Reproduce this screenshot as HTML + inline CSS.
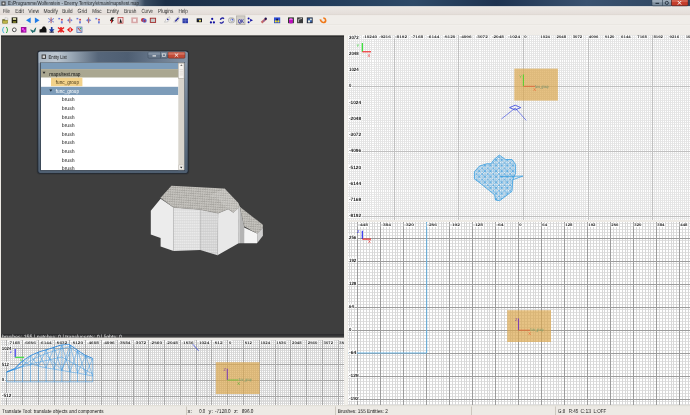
<!DOCTYPE html>
<html><head><meta charset="utf-8"><style>
html,body{margin:0;padding:0;width:690px;height:415px;overflow:hidden;background:#edeae5;font-family:"Liberation Sans",sans-serif;}
</style></head><body>
<svg width="690" height="415" viewBox="0 0 690 415" style="position:absolute;left:0;top:0;will-change:transform;text-rendering:geometricPrecision">
<defs>
<linearGradient id="tbar" x1="0" y1="0" x2="1" y2="0">
 <stop offset="0" stop-color="#9eabb9"/><stop offset="0.05" stop-color="#b2bdc8"/><stop offset="0.19" stop-color="#aab6c2"/><stop offset="0.21" stop-color="#36495f"/><stop offset="0.24" stop-color="#1c2f47"/><stop offset="0.45" stop-color="#213a58"/><stop offset="0.6" stop-color="#2e4a68"/><stop offset="0.72" stop-color="#1e3350"/><stop offset="0.85" stop-color="#3a5270"/><stop offset="1" stop-color="#2e4560"/>
</linearGradient>
<linearGradient id="elbar" x1="0" y1="0" x2="1" y2="0">
 <stop offset="0" stop-color="#aab6c2"/><stop offset="0.12" stop-color="#bcc6d0"/><stop offset="0.22" stop-color="#9aa8b6"/><stop offset="0.4" stop-color="#56667a"/><stop offset="0.6" stop-color="#4e5e72"/><stop offset="0.8" stop-color="#6a7a8e"/><stop offset="1" stop-color="#8494a6"/>
</linearGradient>
<linearGradient id="menug" x1="0" y1="0" x2="0" y2="1">
 <stop offset="0" stop-color="#ece8e4"/><stop offset="1" stop-color="#e3dcd8"/>
</linearGradient>
<linearGradient id="elframe" x1="0" y1="0" x2="0" y2="1">
 <stop offset="0" stop-color="#9eacba"/><stop offset="0.15" stop-color="#8494a6"/><stop offset="1" stop-color="#4e5e70"/>
</linearGradient>
<clipPath id="cEL"><rect x="41" y="62.8" width="137.3" height="107.3"/></clipPath>
<clipPath id="cXY"><rect x="348" y="35" width="342" height="185"/></clipPath>
<clipPath id="cYZ"><rect x="348" y="222" width="342" height="183"/></clipPath>
<clipPath id="cXZ"><rect x="1" y="340" width="343" height="65"/></clipPath>
<clipPath id="cCam"><rect x="1" y="35" width="343" height="302.6"/></clipPath>
<pattern id="roof" width="2.3" height="2.4" patternUnits="userSpaceOnUse" patternTransform="rotate(4)">
 <rect width="2.3" height="2.4" fill="#b8b6b1"/><circle cx="0.9" cy="0.8" r="0.7" fill="#d6d4ce"/><circle cx="1.5" cy="1.7" r="0.55" fill="#8e8c87"/>
</pattern>
<pattern id="brickA" width="2" height="1.6" patternUnits="userSpaceOnUse">
 <rect width="2" height="1.6" fill="#ececec"/><rect y="1.1" width="2" height="0.5" fill="#d2d2d2"/><rect x="1" width="0.4" height="1.1" fill="#dadada"/>
</pattern>
<pattern id="brickB" width="2" height="1.6" patternUnits="userSpaceOnUse">
 <rect width="2" height="1.6" fill="#e2e2e2"/><rect y="1.1" width="2" height="0.5" fill="#c4c4c4"/><rect x="1" width="0.4" height="1.1" fill="#cccccc"/>
</pattern>
<pattern id="hatch" width="5.6" height="5.6" patternUnits="userSpaceOnUse" x="0.5" y="0.3">
 <path d="M0 0L5.6 5.6M5.6 0L0 5.6M0 0H5.6M0 0V5.6M0 2.8H5.6M2.8 0V5.6" stroke="#3098e0" stroke-width="0.5"/>
</pattern>
</defs>
<rect width="690" height="415" fill="#edeae5"/>
<rect x="0" y="0" width="690" height="7" fill="url(#tbar)"/>
<rect x="0" y="6.5" width="690" height="8.5" fill="url(#menug)"/>
<rect x="0" y="6.3" width="690" height="0.7" fill="#f4f2ee"/>
<rect x="0" y="14.6" width="690" height="0.6" fill="#d9d5cd"/>
<rect x="0" y="15.2" width="690" height="19.5" fill="#f0ede9"/>
<rect x="0" y="24.3" width="690" height="0.5" fill="#dedad3"/>
<rect x="0" y="24.8" width="690" height="0.5" fill="#f8f6f2"/>
<rect x="1.5" y="1.5" width="4" height="4" fill="#3a3a3a"/><rect x="2.5" y="2.5" width="2" height="2" fill="#dddddd"/>
<text x="8" y="5" font-family="Liberation Sans" font-size="5.8" fill="#202428" font-weight="normal" text-anchor="start" textLength="131" lengthAdjust="spacingAndGlyphs">E:/Programme/Wolfenstein - Enemy Territory/etmain/maps/test.map</text>
<rect x="652" y="-1" width="19.5" height="6.8" rx="1" fill="#7e8e9e" stroke="#2a3a4a" stroke-width="0.5"/>
<rect x="652.3" y="-0.5" width="19" height="2.8" fill="#c0ccd8" fill-opacity="0.45"/>
<rect x="662" y="-1" width="0.6" height="6.8" fill="#2a3a4a"/>
<rect x="655.5" y="2.8" width="3.6" height="1.1" fill="#1e2a36"/>
<circle cx="666.8" cy="2.9" r="1.6" fill="none" stroke="#1e2a36" stroke-width="0.8"/>
<rect x="671.5" y="-1" width="16.5" height="6.8" rx="1" fill="#c43c2a" stroke="#4a1a14" stroke-width="0.5"/>
<rect x="671.8" y="-0.5" width="16" height="2.6" fill="#f0a090" fill-opacity="0.35"/>
<path d="M677.8 1L681.2 4.6M681.2 1L677.8 4.6" stroke="#f6f6f6" stroke-width="1"/>
<text x="2.9" y="13" font-family="Liberation Sans" font-size="6" fill="#2e2e2e" font-weight="normal" text-anchor="start" textLength="7" lengthAdjust="spacingAndGlyphs">File</text>
<text x="15.2" y="13" font-family="Liberation Sans" font-size="6" fill="#2e2e2e" font-weight="normal" text-anchor="start" textLength="8.7" lengthAdjust="spacingAndGlyphs">Edit</text>
<text x="28.3" y="13" font-family="Liberation Sans" font-size="6" fill="#2e2e2e" font-weight="normal" text-anchor="start" textLength="10.8" lengthAdjust="spacingAndGlyphs">View</text>
<text x="43.5" y="13" font-family="Liberation Sans" font-size="6" fill="#2e2e2e" font-weight="normal" text-anchor="start" textLength="14.5" lengthAdjust="spacingAndGlyphs">Modify</text>
<text x="62.3" y="13" font-family="Liberation Sans" font-size="6" fill="#2e2e2e" font-weight="normal" text-anchor="start" textLength="10.2" lengthAdjust="spacingAndGlyphs">Build</text>
<text x="77.5" y="13" font-family="Liberation Sans" font-size="6" fill="#2e2e2e" font-weight="normal" text-anchor="start" textLength="9.5" lengthAdjust="spacingAndGlyphs">Grid</text>
<text x="92.2" y="13" font-family="Liberation Sans" font-size="6" fill="#2e2e2e" font-weight="normal" text-anchor="start" textLength="9.4" lengthAdjust="spacingAndGlyphs">Misc</text>
<text x="106.7" y="13" font-family="Liberation Sans" font-size="6" fill="#2e2e2e" font-weight="normal" text-anchor="start" textLength="12.3" lengthAdjust="spacingAndGlyphs">Entity</text>
<text x="124" y="13" font-family="Liberation Sans" font-size="6" fill="#2e2e2e" font-weight="normal" text-anchor="start" textLength="12.4" lengthAdjust="spacingAndGlyphs">Brush</text>
<text x="141.4" y="13" font-family="Liberation Sans" font-size="6" fill="#2e2e2e" font-weight="normal" text-anchor="start" textLength="11.6" lengthAdjust="spacingAndGlyphs">Curve</text>
<text x="158" y="13" font-family="Liberation Sans" font-size="6" fill="#2e2e2e" font-weight="normal" text-anchor="start" textLength="15.3" lengthAdjust="spacingAndGlyphs">Plugins</text>
<text x="178.4" y="13" font-family="Liberation Sans" font-size="6" fill="#2e2e2e" font-weight="normal" text-anchor="start" textLength="9.4" lengthAdjust="spacingAndGlyphs">Help</text>
<path d="M2.3 19.2h2.2l0.6 0.6h2.6v3.6h-5.4z" fill="#5a5a22"/><path d="M5 17.6l2.8 0.5v1.8l-2.6 0.3z" fill="#f4f4f4" stroke="#8a8a8a" stroke-width="0.3"/><path d="M2.8 20.6h5.4l-1.1 2.8h-4.3z" fill="#bcb448"/>
<rect x="11.7" y="17.4" width="5.6" height="5.8" fill="#1e1e10"/><rect x="12.9" y="18" width="3.2" height="2" fill="#cfcfa0"/><rect x="12.9" y="21.2" width="3.2" height="1.6" fill="#8a8a30"/>
<path d="M26 20.3L30.7 17.4V23.2z" fill="#1f7be8"/>
<path d="M39.5 20.3L34.9 17.4V23.2z" fill="#1f7be8"/>
<path d="M48.2 18.4L54 22.2M54 18.4L48.2 22.2" stroke="#6a7ad8" stroke-width="0.9"/><rect x="50.6" y="17.4" width="1" height="5.8" fill="#b05a60"/>
<rect x="58.3" y="17.9" width="1.8" height="1.5" fill="#6a7ad8"/><rect x="61.1" y="18.9" width="1.6" height="1.6" fill="#c03040"/><rect x="60.9" y="21.2" width="1.8" height="2.2" fill="#6a7ad8"/>
<path d="M67 20.3L69 18.8V21.8zM72.6 20.3L70.6 18.8V21.8z" fill="#6a7ad8"/><rect x="69.3" y="17.4" width="1" height="5.8" fill="#b05a60"/>
<rect x="76.5" y="17.9" width="1.8" height="1.5" fill="#6a7ad8"/><rect x="79.3" y="18.9" width="1.6" height="1.6" fill="#c03040"/><rect x="79.1" y="21.2" width="1.8" height="2.2" fill="#6a7ad8"/>
<path d="M86 20.3L88 18.8V21.8zM91.2 20.3L89.2 18.8V21.8z" fill="#6a7ad8"/><rect x="88.1" y="17.4" width="1" height="5.8" fill="#b05a60"/>
<rect x="95.4" y="17.9" width="1.8" height="1.5" fill="#6a7ad8"/><rect x="98.2" y="18.9" width="1.6" height="1.6" fill="#c03040"/><rect x="98" y="21.2" width="1.8" height="2.2" fill="#6a7ad8"/>
<path d="M111.4 17.4h3l-2 2.5h1.5l-3 3.8l0.5-2.8h-1.5z" fill="#1a1a1a"/><rect x="110.9" y="19.9" width="1.3" height="2.5" fill="#d02020"/>
<rect x="118" y="17.4" width="5" height="5.8" fill="#f0e0e0" stroke="#c04040" stroke-width="0.7"/><path d="M119.5 22.7L120.5 18.4L122 22.7" fill="#1a1a1a"/>
<rect x="131.3" y="17.4" width="6.5" height="5.8" fill="#d8a8a8"/><rect x="133.1" y="18.9" width="2.9" height="2.8" fill="#f6eeee"/>
<circle cx="143" cy="19.9" r="2" fill="#c03040"/><circle cx="144.6" cy="20.7" r="2.1" fill="#5a6ad0"/><circle cx="144.6" cy="20.9" r="1" fill="#b03040"/>
<rect x="150.3" y="18.2" width="5.3" height="4.2" fill="#c8cccc" stroke="#a02828" stroke-width="0.9"/>
<path d="M164.5 22.2l2-3.5l3-2l0.5 1.5l-2 3.5z" fill="#f8f8f8" stroke="#909090" stroke-width="0.4"/><circle cx="167.8" cy="19.4" r="0.8" fill="#101090"/>
<path d="M173.8 22.2l2-3.5l3-2l0.5 1.5l-2 3.5z" fill="#f8f8f8" stroke="#909090" stroke-width="0.4"/><path d="M175.3 21.4L178.5 17.9" stroke="#101090" stroke-width="1.2"/>
<rect x="182.5" y="18.4" width="5.5" height="4.8" fill="#2a3aa8"/><path d="M185.25 18.4V23.2M182.5 20.8H188" stroke="#9aa0d8" stroke-width="0.4"/>
<rect x="196.7" y="18.4" width="5.3" height="3.8" fill="#1a1a1a"/><path d="M197.7 19.6H201" stroke="#2040a0" stroke-width="1"/><circle cx="200" cy="20.7" r="1.1" fill="#e8e070"/>
<circle cx="212.2" cy="18.9" r="1.1" fill="#1010a0"/><circle cx="210.9" cy="22.4" r="1.1" fill="#1010a0"/><circle cx="213.9" cy="22.4" r="1.1" fill="#1010a0"/>
<path d="M220.5 19.9a2 2 0 0 1 3.5-1.2" stroke="#2020a0" stroke-width="1.3" fill="none"/><path d="M223.4 21.2a2 2 0 0 1 -3.5 1.2" stroke="#2020a0" stroke-width="1.3" fill="none"/>
<rect x="228.7" y="17.9" width="5.5" height="4.8" rx="1.5" fill="#e8e8e8" stroke="#8a8a8a" stroke-width="0.6"/><circle cx="231.95" cy="20" r="1.6" fill="#f8f8ff" stroke="#707070" stroke-width="0.4"/><circle cx="232.25" cy="19.7" r="0.7" fill="#1030e0"/>
<rect x="236.5" y="15.9" width="8.5" height="8.8" fill="#d2cfc8" stroke="#a9a59c" stroke-width="0.6"/><text x="238" y="22.7" font-family="Liberation Sans" font-size="5.5" fill="#2828a0" font-weight="bold" text-anchor="start" textLength="6" lengthAdjust="spacingAndGlyphs">QK</text>
<circle cx="248.6" cy="18.4" r="1" fill="#1010a0"/><circle cx="248.6" cy="22.2" r="1" fill="#1010a0"/><path d="M250.1 18.8L253 20.3L250.1 21.8z" fill="#1010a0"/>
<path d="M261.5 22.7L266 18.9" stroke="#c86868" stroke-width="2.2"/><path d="M263 21.2L265 20.4" stroke="#7060b0" stroke-width="0.9"/><circle cx="265.7" cy="18.7" r="1.2" fill="#201050"/>
<rect x="274" y="17.4" width="6.2" height="5.8" fill="#3050d8"/><circle cx="275.8" cy="21.4" r="1.1" fill="#f0e020"/><circle cx="278.4" cy="21.4" r="1.1" fill="#f0e020"/><circle cx="277.1" cy="19.4" r="0.9" fill="#101040"/>
<rect x="288" y="17.4" width="5.9" height="5.8" fill="#2a3a2a"/><path d="M289 19.2h3.9v3.2a1.95 1 0 0 1 -3.9 0z" fill="#c010c0"/><ellipse cx="290.95" cy="19.2" rx="1.95" ry="0.9" fill="#f060f0"/>
<rect x="297.1" y="17.4" width="5.9" height="5.8" fill="#3a3a3a"/><path d="M298.6 22.2V19.4L302 18.4" stroke="#d0d0d0" stroke-width="0.8" fill="none"/>
<rect x="306.8" y="17.4" width="5.9" height="5.8" fill="#2a3040"/><rect x="307.8" y="18.4" width="3.9" height="3.8" fill="#3a68b0"/><rect x="308" y="20.4" width="2" height="2" fill="#f0f0e0"/><rect x="310.1" y="18.6" width="1.6" height="1.6" fill="#f0f0e0"/>
<path d="M321.35 20.9A2.2 2.2 0 1 0 323.35 18.1" stroke="#f07818" stroke-width="1.6" fill="none"/><path d="M319.6 19.1l2.6 0.9l-2 1.8z" fill="#f07818"/>
<path d="M4.2 27.3q-1.2 0 -1.2 1.2v0.9l-0.8 0.6l0.8 0.6v0.9q0 1.2 1.2 1.2" stroke="#38b0e0" stroke-width="1" fill="none"/><path d="M6 27.3q1.2 0 1.2 1.2v0.9l0.8 0.6l-0.8 0.6v0.9q0 1.2 -1.2 1.2" stroke="#28a838" stroke-width="1" fill="none"/>
<circle cx="14.3" cy="29.8" r="1.9" fill="#f8f8f8" stroke="#505050" stroke-width="1"/>
<rect x="20.9" y="27" width="5.5" height="5.6" fill="#9a109a"/><rect x="21.9" y="28" width="2" height="2" fill="#f040f0"/><rect x="23.4" y="29.6" width="2" height="2" fill="#f040f0"/>
<path d="M30.7 29.8l2 3l3-5l-1 4z" fill="#1a6a6a" stroke="#1a6a6a" stroke-width="0.8"/>
<path d="M39.5 32.6v-3l2 -0.5l1.5-2.5h2l1.5 2.5v3.5z" fill="#101010"/>
<path d="M50.9 27h1.6v2.2h2l-2.8 3.3l-2.8-3.3h2z" fill="#1a3aa0"/><rect x="49.5" y="31.6" width="4.4" height="1" fill="#101030"/>
<path d="M58 27.5L64 32.1M64 27.5L58 32.1M61 27V32.6" stroke="#e82020" stroke-width="1.5"/>
<path d="M70.15 27L73.3 29.8L70.15 32.6L67 29.8z" fill="#e81818"/><rect x="69.65" y="28.3" width="1" height="3" fill="#ffffff"/>
<rect x="76.9" y="27" width="5.1" height="5.6" fill="#c8d8f0" stroke="#4a6ab0" stroke-width="0.7"/><path d="M77.9 28L81 31.6" stroke="#c03030" stroke-width="1"/><rect x="79.8" y="27.8" width="1.4" height="1.4" fill="#30a050"/>
<rect x="1" y="35.6" width="343" height="302" fill="#3e3e3e"/>
<rect x="1" y="35.6" width="343" height="0.9" fill="#1c1c1c"/>
<rect x="1" y="334.2" width="343" height="1.3" fill="#2a2a2c"/>
<g clip-path="url(#cCam)">
<path d="M160.6 198.8L150.8 210.8V234.6L160.6 237.9V246.5L173.6 250.9V207.5Z" fill="#ececec"/>
<path d="M173.6 207.5L200.2 209.6V250L173.6 250.9Z" fill="url(#brickA)"/>
<path d="M200.2 209.6L218.1 213.2L217.5 255.2L200.2 250Z" fill="url(#brickB)"/>
<path d="M218.1 213.2L228.2 208.9L233.3 212.5L238.4 206L238.6 243.3L217.5 255.2Z" fill="#e8e8e8"/>
<path d="M238.4 205L239.8 206.7V243.3H238.6Z" fill="#f6f6f6"/>
<path d="M239.8 206.7L244.1 226.2V243.3H239.8Z" fill="#b4b4b4"/>
<path d="M244.1 227.5L257.1 233.5V243.3H244.1Z" fill="#f4f4f4"/>
<path d="M257.1 233.5L262.9 227.7V235.7L257.1 243.3Z" fill="#cfcfcf"/>
<path d="M171.4 185.8L224.6 188.5L238.4 203.1L239.8 206.7L233.3 212.5L228.2 208.9L218.1 213.2L200.2 209.6L173.6 207.5L160.6 197.8Z" fill="url(#roof)"/>
<path d="M209.5 195.9L218.1 198.8L222.5 203.8L228.2 208.9L233.3 212.5L239.8 206.7L238.4 203.1L224.6 188.5Z" fill="#ffffff" fill-opacity="0.12"/>
<path d="M239.8 206.7L262.9 224.8L262.9 227.7L257.1 233.5L244.1 226.2Z" fill="url(#roof)"/>
<path d="M160.6 197.8L173.6 207.5L200.2 209.6L218.1 213.2L228.2 208.9L233.3 212.5L239.8 206.7" fill="none" stroke="#a09e9a" stroke-width="0.5"/>
<path d="M173.6 207.5V250.9M200.2 209.6V250M218.1 213.2L217.5 255.2" stroke="#c8c8c8" stroke-width="0.4"/>
</g>
<g clip-path="url(#cCam)">
<text x="2" y="338.5" font-family="Liberation Sans" font-size="6.2" fill="#e8e8e8" font-weight="normal" text-anchor="start" textLength="120" lengthAdjust="spacingAndGlyphs">brushes: 155 | patches: 0 | translucents: 0 | lights: 0</text>
</g>
<rect x="36.8" y="50.2" width="152.4" height="124.4" rx="3" fill="#303234" fill-opacity="0.8"/>
<rect x="37.6" y="50.8" width="150.8" height="122.8" rx="2.4" fill="#1c2430"/>
<rect x="38.3" y="51.5" width="149.4" height="121.4" rx="2" fill="url(#elframe)"/>
<rect x="38.8" y="52" width="148.4" height="10.8" fill="url(#elbar)"/>
<rect x="40.3" y="62.3" width="144.6" height="108.6" fill="#34404e"/>
<rect x="41" y="62.8" width="143.2" height="107.3" fill="#ffffff"/>
<rect x="41.6" y="54.5" width="4.4" height="4.4" fill="#404040"/><rect x="42.6" y="55.5" width="2.4" height="2.4" fill="#d8d8d8"/>
<text x="48.5" y="58.9" font-family="Liberation Sans" font-size="5.5" fill="#1a1a1a" font-weight="normal" text-anchor="start" textLength="18.2" lengthAdjust="spacingAndGlyphs">Entity List</text>
<rect x="148" y="52" width="20" height="6.2" rx="1" fill="#66768a" stroke="#3a4858" stroke-width="0.5"/>
<rect x="148.3" y="52.2" width="19.4" height="2.6" fill="#9aa8b8" fill-opacity="0.5"/>
<rect x="160" y="52" width="0.5" height="6.2" fill="#3a4858"/>
<rect x="152.5" y="55.3" width="3.5" height="1.2" fill="#e8e8e8"/>
<rect x="162.6" y="53.8" width="3" height="2.6" fill="none" stroke="#e0e0e0" stroke-width="0.7"/>
<rect x="168" y="52" width="17" height="6.2" rx="1" fill="#c04a36" stroke="#5a2a20" stroke-width="0.5"/>
<rect x="168.3" y="52.2" width="16.4" height="2.6" fill="#e8a090" fill-opacity="0.45"/>
<path d="M174.8 53.5L178.2 56.8M178.2 53.5L174.8 56.8" stroke="#f4f4f4" stroke-width="0.9"/>
<rect x="41" y="62.8" width="137.3" height="6.3" fill="#7d9cb9"/>
<rect x="41" y="69.1" width="137.3" height="8.4" fill="#aaa791"/>
<path d="M42.5 71.8h3l-1.5 2.2z" fill="#303030"/>
<text x="49.2" y="75.5" font-family="Liberation Sans" font-size="5.5" fill="#111111" font-weight="normal" text-anchor="start" textLength="31.3" lengthAdjust="spacingAndGlyphs">maps/test.map</text>
<rect x="51" y="77.6" width="31.4" height="8.6" fill="#f3d28a"/>
<text x="55.8" y="84.2" font-family="Liberation Sans" font-size="5.5" fill="#4a3a1a" font-weight="normal" text-anchor="start" textLength="23.2" lengthAdjust="spacingAndGlyphs">func_group</text>
<rect x="41" y="86.8" width="137.3" height="8.2" fill="#7d9cb9"/>
<path d="M49.3 89.6h3l-1.5 2.2z" fill="#1a2a3a"/>
<text x="55.8" y="93" font-family="Liberation Sans" font-size="5.5" fill="#ffffff" font-weight="normal" text-anchor="start" textLength="23.2" lengthAdjust="spacingAndGlyphs">func_group</text>
<text x="61.8" y="101.3" font-family="Liberation Sans" font-size="5.1" fill="#111111" font-weight="normal" text-anchor="start" clip-path="url(#cEL)">brush</text>
<text x="61.8" y="109.9" font-family="Liberation Sans" font-size="5.1" fill="#111111" font-weight="normal" text-anchor="start" clip-path="url(#cEL)">brush</text>
<text x="61.8" y="118.5" font-family="Liberation Sans" font-size="5.1" fill="#111111" font-weight="normal" text-anchor="start" clip-path="url(#cEL)">brush</text>
<text x="61.8" y="127.1" font-family="Liberation Sans" font-size="5.1" fill="#111111" font-weight="normal" text-anchor="start" clip-path="url(#cEL)">brush</text>
<text x="61.8" y="135.7" font-family="Liberation Sans" font-size="5.1" fill="#111111" font-weight="normal" text-anchor="start" clip-path="url(#cEL)">brush</text>
<text x="61.8" y="144.3" font-family="Liberation Sans" font-size="5.1" fill="#111111" font-weight="normal" text-anchor="start" clip-path="url(#cEL)">brush</text>
<text x="61.8" y="152.9" font-family="Liberation Sans" font-size="5.1" fill="#111111" font-weight="normal" text-anchor="start" clip-path="url(#cEL)">brush</text>
<text x="61.8" y="161.5" font-family="Liberation Sans" font-size="5.1" fill="#111111" font-weight="normal" text-anchor="start" clip-path="url(#cEL)">brush</text>
<text x="61.8" y="170.1" font-family="Liberation Sans" font-size="5.1" fill="#111111" font-weight="normal" text-anchor="start" clip-path="url(#cEL)">brush</text>
<rect x="178.3" y="62.8" width="5.9" height="107.3" fill="#d8d4cc"/>
<rect x="178.6" y="63.2" width="5.4" height="15.2" fill="#f6f4f0" stroke="#a8a49c" stroke-width="0.5"/>
<path d="M180.2 65.7h2.4l-1.2-1.2z" fill="#404040"/>
<path d="M179.6 69.5h3.4M179.6 71.3h3.4M179.6 73.1h3.4M179.6 74.9h3.4" stroke="#c4c0b8" stroke-width="0.4"/>
<rect x="178.8" y="165" width="4.9" height="4.8" fill="#f4f2ee" stroke="#bab6ad" stroke-width="0.4"/>
<path d="M180 166.8h2.5l-1.25 1.6z" fill="#202020"/>
<g clip-path="url(#cXY)">
<rect x="348" y="35" width="342" height="185" fill="#ffffff"/>
<path d="M348 31.5H690M348 33.5H690M348 35.5H690M348 37.5H690M348 39.5H690M348 41.5H690M348 43.5H690M348 45.5H690M348 47.5H690M348 49.5H690M348 51.5H690M348 53.5H690M348 55.5H690M348 57.5H690M348 59.5H690M348 62.5H690M348 64.5H690M348 66.5H690M348 68.5H690M348 70.5H690M348 72.5H690M348 74.5H690M348 76.5H690M348 78.5H690M348 80.5H690M348 82.5H690M348 84.5H690M348 88.5H690M348 90.5H690M348 92.5H690M348 94.5H690M348 96.5H690M348 98.5H690M348 100.5H690M348 102.5H690M348 104.5H690M348 106.5H690M348 108.5H690M348 110.5H690M348 112.5H690M348 114.5H690M348 116.5H690M348 118.5H690M348 120.5H690M348 122.5H690M348 124.5H690M348 127.5H690M348 129.5H690M348 131.5H690M348 133.5H690M348 135.5H690M348 137.5H690M348 139.5H690M348 141.5H690M348 143.5H690M348 145.5H690M348 147.5H690M348 149.5H690M348 153.5H690M348 155.5H690M348 157.5H690M348 159.5H690M348 161.5H690M348 163.5H690M348 165.5H690M348 167.5H690M348 169.5H690M348 171.5H690M348 173.5H690M348 175.5H690M348 177.5H690M348 179.5H690M348 181.5H690M348 183.5H690M348 185.5H690M348 187.5H690M348 189.5H690M348 192.5H690M348 194.5H690M348 196.5H690M348 198.5H690M348 200.5H690M348 202.5H690M348 204.5H690M348 206.5H690M348 208.5H690M348 210.5H690M348 212.5H690M348 214.5H690M348 218.5H690M348 220.5H690" stroke="#e8e8e8" stroke-width="1" fill="none"/>
<path d="M345.5 35V220M347.5 35V220M349.5 35V220M351.5 35V220M353.5 35V220M355.5 35V220M357.5 35V220M359.5 35V220M361.5 35V220M363.5 35V220M365.5 35V220M367.5 35V220M369.5 35V220M371.5 35V220M374.5 35V220M376.5 35V220M378.5 35V220M380.5 35V220M382.5 35V220M384.5 35V220M386.5 35V220M388.5 35V220M390.5 35V220M392.5 35V220M396.5 35V220M398.5 35V220M400.5 35V220M402.5 35V220M404.5 35V220M406.5 35V220M408.5 35V220M410.5 35V220M412.5 35V220M414.5 35V220M416.5 35V220M418.5 35V220M420.5 35V220M422.5 35V220M424.5 35V220M426.5 35V220M428.5 35V220M430.5 35V220M432.5 35V220M434.5 35V220M436.5 35V220M438.5 35V220M440.5 35V220M442.5 35V220M444.5 35V220M446.5 35V220M448.5 35V220M450.5 35V220M452.5 35V220M454.5 35V220M456.5 35V220M460.5 35V220M462.5 35V220M464.5 35V220M466.5 35V220M468.5 35V220M470.5 35V220M472.5 35V220M474.5 35V220M476.5 35V220M478.5 35V220M481.5 35V220M483.5 35V220M485.5 35V220M487.5 35V220M489.5 35V220M491.5 35V220M493.5 35V220M495.5 35V220M497.5 35V220M499.5 35V220M501.5 35V220M503.5 35V220M505.5 35V220M507.5 35V220M509.5 35V220M511.5 35V220M513.5 35V220M515.5 35V220M517.5 35V220M519.5 35V220M521.5 35V220M525.5 35V220M527.5 35V220M529.5 35V220M531.5 35V220M533.5 35V220M535.5 35V220M537.5 35V220M539.5 35V220M541.5 35V220M543.5 35V220M545.5 35V220M547.5 35V220M549.5 35V220M551.5 35V220M553.5 35V220M555.5 35V220M557.5 35V220M559.5 35V220M561.5 35V220M563.5 35V220M565.5 35V220M567.5 35V220M569.5 35V220M571.5 35V220M573.5 35V220M575.5 35V220M577.5 35V220M579.5 35V220M581.5 35V220M583.5 35V220M585.5 35V220M590.5 35V220M592.5 35V220M594.5 35V220M596.5 35V220M598.5 35V220M600.5 35V220M602.5 35V220M604.5 35V220M606.5 35V220M608.5 35V220M610.5 35V220M612.5 35V220M614.5 35V220M616.5 35V220M618.5 35V220M620.5 35V220M622.5 35V220M624.5 35V220M626.5 35V220M628.5 35V220M630.5 35V220M632.5 35V220M634.5 35V220M636.5 35V220M638.5 35V220M640.5 35V220M642.5 35V220M644.5 35V220M646.5 35V220M648.5 35V220M650.5 35V220M654.5 35V220M656.5 35V220M658.5 35V220M660.5 35V220M662.5 35V220M664.5 35V220M666.5 35V220M668.5 35V220M670.5 35V220M672.5 35V220M674.5 35V220M676.5 35V220M678.5 35V220M680.5 35V220M682.5 35V220M684.5 35V220M686.5 35V220M688.5 35V220M690.5 35V220" stroke="#e4e4e4" stroke-width="1" fill="none"/>
<path d="M394.5 35V220M458.5 35V220M523.5 35V220M588.5 35V220M652.5 35V220M348 86.5H690M348 151.5H690M348 216.5H690" stroke="#c0c0c0" stroke-width="1" fill="none"/>
</g>
<g clip-path="url(#cYZ)">
<rect x="348" y="222" width="342" height="183" fill="#ffffff"/>
<path d="M348 217.5H690M348 220.5H690M348 223.5H690M348 226.5H690M348 229.5H690M348 232.5H690M348 235.5H690M348 240.5H690M348 243.5H690M348 246.5H690M348 249.5H690M348 252.5H690M348 255.5H690M348 258.5H690M348 263.5H690M348 266.5H690M348 269.5H690M348 272.5H690M348 275.5H690M348 278.5H690M348 281.5H690M348 286.5H690M348 289.5H690M348 292.5H690M348 295.5H690M348 298.5H690M348 301.5H690M348 304.5H690M348 309.5H690M348 312.5H690M348 315.5H690M348 318.5H690M348 321.5H690M348 324.5H690M348 327.5H690M348 332.5H690M348 335.5H690M348 338.5H690M348 341.5H690M348 344.5H690M348 347.5H690M348 350.5H690M348 355.5H690M348 358.5H690M348 361.5H690M348 364.5H690M348 367.5H690M348 370.5H690M348 373.5H690M348 378.5H690M348 381.5H690M348 384.5H690M348 387.5H690M348 390.5H690M348 393.5H690M348 396.5H690M348 401.5H690M348 404.5H690M348 407.5H690" stroke="#e0e0e0" stroke-width="1" fill="none"/>
<path d="M343.5 222V405M346.5 222V405M349.5 222V405M351.5 222V405M354.5 222V405M360.5 222V405M363.5 222V405M366.5 222V405M369.5 222V405M372.5 222V405M374.5 222V405M377.5 222V405M383.5 222V405M386.5 222V405M389.5 222V405M392.5 222V405M395.5 222V405M397.5 222V405M400.5 222V405M406.5 222V405M409.5 222V405M412.5 222V405M415.5 222V405M418.5 222V405M420.5 222V405M423.5 222V405M429.5 222V405M432.5 222V405M435.5 222V405M438.5 222V405M441.5 222V405M443.5 222V405M446.5 222V405M452.5 222V405M455.5 222V405M458.5 222V405M461.5 222V405M464.5 222V405M466.5 222V405M469.5 222V405M475.5 222V405M478.5 222V405M481.5 222V405M484.5 222V405M487.5 222V405M489.5 222V405M492.5 222V405M498.5 222V405M501.5 222V405M504.5 222V405M507.5 222V405M510.5 222V405M512.5 222V405M515.5 222V405M521.5 222V405M524.5 222V405M527.5 222V405M530.5 222V405M533.5 222V405M535.5 222V405M538.5 222V405M544.5 222V405M547.5 222V405M550.5 222V405M553.5 222V405M556.5 222V405M558.5 222V405M561.5 222V405M567.5 222V405M570.5 222V405M573.5 222V405M576.5 222V405M579.5 222V405M581.5 222V405M584.5 222V405M590.5 222V405M593.5 222V405M596.5 222V405M599.5 222V405M602.5 222V405M604.5 222V405M607.5 222V405M613.5 222V405M616.5 222V405M619.5 222V405M622.5 222V405M625.5 222V405M627.5 222V405M630.5 222V405M636.5 222V405M639.5 222V405M642.5 222V405M645.5 222V405M648.5 222V405M650.5 222V405M653.5 222V405M659.5 222V405M662.5 222V405M665.5 222V405M668.5 222V405M671.5 222V405M673.5 222V405M676.5 222V405M682.5 222V405M685.5 222V405M688.5 222V405M691.5 222V405" stroke="#d8d8d8" stroke-width="1" fill="none"/>
<path d="M357.5 222V405M380.5 222V405M403.5 222V405M426.5 222V405M449.5 222V405M472.5 222V405M495.5 222V405M518.5 222V405M541.5 222V405M564.5 222V405M587.5 222V405M610.5 222V405M633.5 222V405M656.5 222V405M679.5 222V405M348 238.5H690M348 261.5H690M348 284.5H690M348 307.5H690M348 330.5H690M348 353.5H690M348 376.5H690M348 399.5H690" stroke="#9c9c9c" stroke-width="1" fill="none"/>
</g>
<g clip-path="url(#cXZ)">
<rect x="1" y="340" width="343" height="65" fill="#ffffff"/>
<path d="M1 336.5H344M1 338.5H344M1 340.5H344M1 342.5H344M1 344.5H344M1 346.5H344M1 350.5H344M1 352.5H344M1 354.5H344M1 356.5H344M1 358.5H344M1 360.5H344M1 362.5H344M1 366.5H344M1 368.5H344M1 370.5H344M1 372.5H344M1 374.5H344M1 376.5H344M1 378.5H344M1 382.5H344M1 384.5H344M1 386.5H344M1 388.5H344M1 390.5H344M1 392.5H344M1 394.5H344M1 398.5H344M1 400.5H344M1 401.5H344M1 403.5H344M1 405.5H344" stroke="#dedede" stroke-width="1" fill="none"/>
<path d="M-1.5 340V405M0.5 340V405M2.5 340V405M4.5 340V405M8.5 340V405M10.5 340V405M12.5 340V405M14.5 340V405M16.5 340V405M18.5 340V405M20.5 340V405M24.5 340V405M26.5 340V405M28.5 340V405M30.5 340V405M32.5 340V405M34.5 340V405M36.5 340V405M40.5 340V405M42.5 340V405M44.5 340V405M46.5 340V405M48.5 340V405M50.5 340V405M52.5 340V405M56.5 340V405M58.5 340V405M60.5 340V405M62.5 340V405M63.5 340V405M65.5 340V405M67.5 340V405M71.5 340V405M73.5 340V405M75.5 340V405M77.5 340V405M79.5 340V405M81.5 340V405M83.5 340V405M87.5 340V405M89.5 340V405M91.5 340V405M93.5 340V405M95.5 340V405M97.5 340V405M99.5 340V405M103.5 340V405M105.5 340V405M107.5 340V405M109.5 340V405M111.5 340V405M113.5 340V405M115.5 340V405M119.5 340V405M121.5 340V405M123.5 340V405M125.5 340V405M127.5 340V405M129.5 340V405M131.5 340V405M134.5 340V405M136.5 340V405M138.5 340V405M140.5 340V405M142.5 340V405M144.5 340V405M146.5 340V405M150.5 340V405M152.5 340V405M154.5 340V405M156.5 340V405M158.5 340V405M160.5 340V405M162.5 340V405M166.5 340V405M168.5 340V405M170.5 340V405M172.5 340V405M174.5 340V405M176.5 340V405M178.5 340V405M182.5 340V405M184.5 340V405M186.5 340V405M188.5 340V405M190.5 340V405M192.5 340V405M194.5 340V405M198.5 340V405M200.5 340V405M202.5 340V405M204.5 340V405M206.5 340V405M207.5 340V405M209.5 340V405M213.5 340V405M215.5 340V405M217.5 340V405M219.5 340V405M221.5 340V405M223.5 340V405M225.5 340V405M229.5 340V405M231.5 340V405M233.5 340V405M235.5 340V405M237.5 340V405M239.5 340V405M241.5 340V405M245.5 340V405M247.5 340V405M249.5 340V405M251.5 340V405M253.5 340V405M255.5 340V405M257.5 340V405M261.5 340V405M263.5 340V405M265.5 340V405M267.5 340V405M269.5 340V405M271.5 340V405M273.5 340V405M277.5 340V405M278.5 340V405M280.5 340V405M282.5 340V405M284.5 340V405M286.5 340V405M288.5 340V405M292.5 340V405M294.5 340V405M296.5 340V405M298.5 340V405M300.5 340V405M302.5 340V405M304.5 340V405M308.5 340V405M310.5 340V405M312.5 340V405M314.5 340V405M316.5 340V405M318.5 340V405M320.5 340V405M324.5 340V405M326.5 340V405M328.5 340V405M330.5 340V405M332.5 340V405M334.5 340V405M336.5 340V405M340.5 340V405M342.5 340V405M344.5 340V405" stroke="#d6d6d6" stroke-width="1" fill="none"/>
<path d="M6.5 340V405M22.5 340V405M38.5 340V405M54.5 340V405M69.5 340V405M85.5 340V405M101.5 340V405M117.5 340V405M133.5 340V405M148.5 340V405M164.5 340V405M180.5 340V405M196.5 340V405M211.5 340V405M227.5 340V405M243.5 340V405M259.5 340V405M275.5 340V405M290.5 340V405M306.5 340V405M322.5 340V405M338.5 340V405M1 348.5H344M1 364.5H344M1 380.5H344M1 396.5H344" stroke="#a8a8a8" stroke-width="1" fill="none"/>
</g>
<g clip-path="url(#cXY)">
<rect x="514.3" y="68.6" width="43.6" height="32" fill="#dca850" fill-opacity="0.7"/>
<path d="M499.3 155.1L505.5 159.5L512 159.5L515.6 164.5L515.6 173.2L512.8 179.7L512 191.3L499.7 200.7L495.4 200L494.7 194.9L479.5 182.6L474.4 179L474.4 171.8L479.5 166L486.7 163.8L491 163.8L494 159.5Z" fill="url(#hatch)" stroke="#3a9ee0" stroke-width="0.8"/>
<path d="M500 176.5L522.9 176.1L512.8 179.7" fill="none" stroke="#3a9ee0" stroke-width="0.8"/>
<path d="M515.2 108L501.4 119M515.2 108L526.2 120.4" stroke="#3040e0" stroke-width="0.6"/>
<path d="M509.6 107.6L515.2 105.2L520.7 107.6L515.2 110Z" fill="none" stroke="#3040e0" stroke-width="0.8"/>
<path d="M523.4 74.5V86.3" stroke="#58d030" stroke-width="1.1"/>
<path d="M523.4 86.3H535" stroke="#e05028" stroke-width="0.7"/>
<text x="519.2" y="77.5" font-family="Liberation Sans" font-size="4" fill="#60c040" font-weight="normal" text-anchor="start">Y</text>
<text x="533.2" y="91.2" font-family="Liberation Sans" font-size="4.2" fill="#f06030" font-weight="normal" text-anchor="start">X</text>
<text x="535" y="87.6" font-family="Liberation Sans" font-size="4.2" fill="#6a8a6a" font-weight="normal" text-anchor="start" textLength="13.5" lengthAdjust="spacingAndGlyphs">func_group</text>
<path d="M362.3 43V51.8" stroke="#20e020" stroke-width="1.1"/>
<path d="M362.3 51.8H371" stroke="#f02020" stroke-width="1.1"/>
<text x="356.4" y="46.6" font-family="Liberation Sans" font-size="4.2" fill="#20d020" font-weight="normal" text-anchor="start">Y</text>
<text x="367.6" y="56.6" font-family="Liberation Sans" font-size="4.2" fill="#f02020" font-weight="normal" text-anchor="start">X</text>
<rect x="362.2" y="34.9" width="15.4" height="3.8" fill="#fff"/><text x="362.7" y="38.1" font-family="Liberation Sans" font-size="3.7" fill="#2a2a2a" font-weight="bold" text-anchor="start" textLength="14.4" lengthAdjust="spacingAndGlyphs">-10240</text>
<rect x="378.35" y="34.9" width="13" height="3.8" fill="#fff"/><text x="378.85" y="38.1" font-family="Liberation Sans" font-size="3.7" fill="#2a2a2a" font-weight="bold" text-anchor="start" textLength="12" lengthAdjust="spacingAndGlyphs">-9216</text>
<rect x="394.5" y="34.9" width="13" height="3.8" fill="#fff"/><text x="395" y="38.1" font-family="Liberation Sans" font-size="3.7" fill="#2a2a2a" font-weight="bold" text-anchor="start" textLength="12" lengthAdjust="spacingAndGlyphs">-8192</text>
<rect x="410.65" y="34.9" width="13" height="3.8" fill="#fff"/><text x="411.15" y="38.1" font-family="Liberation Sans" font-size="3.7" fill="#2a2a2a" font-weight="bold" text-anchor="start" textLength="12" lengthAdjust="spacingAndGlyphs">-7168</text>
<rect x="426.8" y="34.9" width="13" height="3.8" fill="#fff"/><text x="427.3" y="38.1" font-family="Liberation Sans" font-size="3.7" fill="#2a2a2a" font-weight="bold" text-anchor="start" textLength="12" lengthAdjust="spacingAndGlyphs">-6144</text>
<rect x="442.95" y="34.9" width="13" height="3.8" fill="#fff"/><text x="443.45" y="38.1" font-family="Liberation Sans" font-size="3.7" fill="#2a2a2a" font-weight="bold" text-anchor="start" textLength="12" lengthAdjust="spacingAndGlyphs">-5120</text>
<rect x="459.1" y="34.9" width="13" height="3.8" fill="#fff"/><text x="459.6" y="38.1" font-family="Liberation Sans" font-size="3.7" fill="#2a2a2a" font-weight="bold" text-anchor="start" textLength="12" lengthAdjust="spacingAndGlyphs">-4096</text>
<rect x="475.25" y="34.9" width="13" height="3.8" fill="#fff"/><text x="475.75" y="38.1" font-family="Liberation Sans" font-size="3.7" fill="#2a2a2a" font-weight="bold" text-anchor="start" textLength="12" lengthAdjust="spacingAndGlyphs">-3072</text>
<rect x="491.4" y="34.9" width="13" height="3.8" fill="#fff"/><text x="491.9" y="38.1" font-family="Liberation Sans" font-size="3.7" fill="#2a2a2a" font-weight="bold" text-anchor="start" textLength="12" lengthAdjust="spacingAndGlyphs">-2048</text>
<rect x="507.55" y="34.9" width="13" height="3.8" fill="#fff"/><text x="508.05" y="38.1" font-family="Liberation Sans" font-size="3.7" fill="#2a2a2a" font-weight="bold" text-anchor="start" textLength="12" lengthAdjust="spacingAndGlyphs">-1024</text>
<rect x="523.7" y="34.9" width="3.4" height="3.8" fill="#fff"/><text x="524.2" y="38.1" font-family="Liberation Sans" font-size="3.7" fill="#2a2a2a" font-weight="bold" text-anchor="start" textLength="2.4" lengthAdjust="spacingAndGlyphs">0</text>
<rect x="539.85" y="34.9" width="10.6" height="3.8" fill="#fff"/><text x="540.35" y="38.1" font-family="Liberation Sans" font-size="3.7" fill="#2a2a2a" font-weight="bold" text-anchor="start" textLength="9.6" lengthAdjust="spacingAndGlyphs">1024</text>
<rect x="556" y="34.9" width="10.6" height="3.8" fill="#fff"/><text x="556.5" y="38.1" font-family="Liberation Sans" font-size="3.7" fill="#2a2a2a" font-weight="bold" text-anchor="start" textLength="9.6" lengthAdjust="spacingAndGlyphs">2048</text>
<rect x="572.15" y="34.9" width="10.6" height="3.8" fill="#fff"/><text x="572.65" y="38.1" font-family="Liberation Sans" font-size="3.7" fill="#2a2a2a" font-weight="bold" text-anchor="start" textLength="9.6" lengthAdjust="spacingAndGlyphs">3072</text>
<rect x="588.3" y="34.9" width="10.6" height="3.8" fill="#fff"/><text x="588.8" y="38.1" font-family="Liberation Sans" font-size="3.7" fill="#2a2a2a" font-weight="bold" text-anchor="start" textLength="9.6" lengthAdjust="spacingAndGlyphs">4096</text>
<rect x="604.45" y="34.9" width="10.6" height="3.8" fill="#fff"/><text x="604.95" y="38.1" font-family="Liberation Sans" font-size="3.7" fill="#2a2a2a" font-weight="bold" text-anchor="start" textLength="9.6" lengthAdjust="spacingAndGlyphs">5120</text>
<rect x="620.6" y="34.9" width="10.6" height="3.8" fill="#fff"/><text x="621.1" y="38.1" font-family="Liberation Sans" font-size="3.7" fill="#2a2a2a" font-weight="bold" text-anchor="start" textLength="9.6" lengthAdjust="spacingAndGlyphs">6144</text>
<rect x="636.75" y="34.9" width="10.6" height="3.8" fill="#fff"/><text x="637.25" y="38.1" font-family="Liberation Sans" font-size="3.7" fill="#2a2a2a" font-weight="bold" text-anchor="start" textLength="9.6" lengthAdjust="spacingAndGlyphs">7168</text>
<rect x="652.9" y="34.9" width="10.6" height="3.8" fill="#fff"/><text x="653.4" y="38.1" font-family="Liberation Sans" font-size="3.7" fill="#2a2a2a" font-weight="bold" text-anchor="start" textLength="9.6" lengthAdjust="spacingAndGlyphs">8192</text>
<rect x="669.05" y="34.9" width="10.6" height="3.8" fill="#fff"/><text x="669.55" y="38.1" font-family="Liberation Sans" font-size="3.7" fill="#2a2a2a" font-weight="bold" text-anchor="start" textLength="9.6" lengthAdjust="spacingAndGlyphs">9216</text>
<rect x="685.2" y="34.9" width="13" height="3.8" fill="#fff"/><text x="685.7" y="38.1" font-family="Liberation Sans" font-size="3.7" fill="#2a2a2a" font-weight="bold" text-anchor="start" textLength="12" lengthAdjust="spacingAndGlyphs">10240</text>
<rect x="348.4" y="34.65" width="10.8" height="4.6" fill="#fff"/><text x="349" y="38.65" font-family="Liberation Sans" font-size="4.7" fill="#1a1a1a" font-weight="bold" text-anchor="start" textLength="9.6" lengthAdjust="spacingAndGlyphs">3072</text>
<rect x="348.4" y="50.9" width="10.8" height="4.6" fill="#fff"/><text x="349" y="54.9" font-family="Liberation Sans" font-size="4.7" fill="#1a1a1a" font-weight="bold" text-anchor="start" textLength="9.6" lengthAdjust="spacingAndGlyphs">2048</text>
<rect x="348.4" y="67.15" width="10.8" height="4.6" fill="#fff"/><text x="349" y="71.15" font-family="Liberation Sans" font-size="4.7" fill="#1a1a1a" font-weight="bold" text-anchor="start" textLength="9.6" lengthAdjust="spacingAndGlyphs">1024</text>
<rect x="348.4" y="83.4" width="3.6" height="4.6" fill="#fff"/><text x="349" y="87.4" font-family="Liberation Sans" font-size="4.7" fill="#1a1a1a" font-weight="bold" text-anchor="start" textLength="2.4" lengthAdjust="spacingAndGlyphs">0</text>
<rect x="348.4" y="99.65" width="13.2" height="4.6" fill="#fff"/><text x="349" y="103.65" font-family="Liberation Sans" font-size="4.7" fill="#1a1a1a" font-weight="bold" text-anchor="start" textLength="12" lengthAdjust="spacingAndGlyphs">-1024</text>
<rect x="348.4" y="115.9" width="13.2" height="4.6" fill="#fff"/><text x="349" y="119.9" font-family="Liberation Sans" font-size="4.7" fill="#1a1a1a" font-weight="bold" text-anchor="start" textLength="12" lengthAdjust="spacingAndGlyphs">-2048</text>
<rect x="348.4" y="132.15" width="13.2" height="4.6" fill="#fff"/><text x="349" y="136.15" font-family="Liberation Sans" font-size="4.7" fill="#1a1a1a" font-weight="bold" text-anchor="start" textLength="12" lengthAdjust="spacingAndGlyphs">-3072</text>
<rect x="348.4" y="148.4" width="13.2" height="4.6" fill="#fff"/><text x="349" y="152.4" font-family="Liberation Sans" font-size="4.7" fill="#1a1a1a" font-weight="bold" text-anchor="start" textLength="12" lengthAdjust="spacingAndGlyphs">-4096</text>
<rect x="348.4" y="164.65" width="13.2" height="4.6" fill="#fff"/><text x="349" y="168.65" font-family="Liberation Sans" font-size="4.7" fill="#1a1a1a" font-weight="bold" text-anchor="start" textLength="12" lengthAdjust="spacingAndGlyphs">-5120</text>
<rect x="348.4" y="180.9" width="13.2" height="4.6" fill="#fff"/><text x="349" y="184.9" font-family="Liberation Sans" font-size="4.7" fill="#1a1a1a" font-weight="bold" text-anchor="start" textLength="12" lengthAdjust="spacingAndGlyphs">-6144</text>
<rect x="348.4" y="197.15" width="13.2" height="4.6" fill="#fff"/><text x="349" y="201.15" font-family="Liberation Sans" font-size="4.7" fill="#1a1a1a" font-weight="bold" text-anchor="start" textLength="12" lengthAdjust="spacingAndGlyphs">-7168</text>
<rect x="348.4" y="213.4" width="13.2" height="4.6" fill="#fff"/><text x="349" y="217.4" font-family="Liberation Sans" font-size="4.7" fill="#1a1a1a" font-weight="bold" text-anchor="start" textLength="12" lengthAdjust="spacingAndGlyphs">-8192</text>
</g>
<g clip-path="url(#cYZ)">
<rect x="507.2" y="310.2" width="43.8" height="31.8" fill="#dca850" fill-opacity="0.7"/>
<path d="M426.7 222V353H348" fill="none" stroke="#60b4ea" stroke-width="0.9"/>
<path d="M518.5 318.5V330.2" stroke="#8040b0" stroke-width="1.1"/>
<path d="M518.5 330.2H530" stroke="#e05028" stroke-width="0.7"/>
<text x="515" y="320.8" font-family="Liberation Sans" font-size="4" fill="#8040a0" font-weight="normal" text-anchor="start">Z</text>
<text x="528.3" y="335" font-family="Liberation Sans" font-size="4.2" fill="#f06030" font-weight="normal" text-anchor="start">X</text>
<text x="530.5" y="331.4" font-family="Liberation Sans" font-size="4.2" fill="#6a9a6a" font-weight="normal" text-anchor="start" textLength="13" lengthAdjust="spacingAndGlyphs">func_group</text>
<path d="M362.3 230.7V239.1" stroke="#2020f0" stroke-width="1.1"/>
<path d="M362.3 239.1H371" stroke="#f02020" stroke-width="1.1"/>
<text x="357" y="233" font-family="Liberation Sans" font-size="4.2" fill="#2020f0" font-weight="normal" text-anchor="start">Z</text>
<text x="368" y="243" font-family="Liberation Sans" font-size="4.2" fill="#f02020" font-weight="normal" text-anchor="start">X</text>
<rect x="357.8" y="223.1" width="10.6" height="3.8" fill="#fff"/><text x="358.3" y="226.3" font-family="Liberation Sans" font-size="3.7" fill="#2a2a2a" font-weight="bold" text-anchor="start" textLength="9.6" lengthAdjust="spacingAndGlyphs">-448</text>
<rect x="380.8" y="223.1" width="10.6" height="3.8" fill="#fff"/><text x="381.3" y="226.3" font-family="Liberation Sans" font-size="3.7" fill="#2a2a2a" font-weight="bold" text-anchor="start" textLength="9.6" lengthAdjust="spacingAndGlyphs">-384</text>
<rect x="403.8" y="223.1" width="10.6" height="3.8" fill="#fff"/><text x="404.3" y="226.3" font-family="Liberation Sans" font-size="3.7" fill="#2a2a2a" font-weight="bold" text-anchor="start" textLength="9.6" lengthAdjust="spacingAndGlyphs">-320</text>
<rect x="426.8" y="223.1" width="10.6" height="3.8" fill="#fff"/><text x="427.3" y="226.3" font-family="Liberation Sans" font-size="3.7" fill="#2a2a2a" font-weight="bold" text-anchor="start" textLength="9.6" lengthAdjust="spacingAndGlyphs">-256</text>
<rect x="449.8" y="223.1" width="10.6" height="3.8" fill="#fff"/><text x="450.3" y="226.3" font-family="Liberation Sans" font-size="3.7" fill="#2a2a2a" font-weight="bold" text-anchor="start" textLength="9.6" lengthAdjust="spacingAndGlyphs">-192</text>
<rect x="472.8" y="223.1" width="10.6" height="3.8" fill="#fff"/><text x="473.3" y="226.3" font-family="Liberation Sans" font-size="3.7" fill="#2a2a2a" font-weight="bold" text-anchor="start" textLength="9.6" lengthAdjust="spacingAndGlyphs">-128</text>
<rect x="495.8" y="223.1" width="8.2" height="3.8" fill="#fff"/><text x="496.3" y="226.3" font-family="Liberation Sans" font-size="3.7" fill="#2a2a2a" font-weight="bold" text-anchor="start" textLength="7.2" lengthAdjust="spacingAndGlyphs">-64</text>
<rect x="518.8" y="223.1" width="3.4" height="3.8" fill="#fff"/><text x="519.3" y="226.3" font-family="Liberation Sans" font-size="3.7" fill="#2a2a2a" font-weight="bold" text-anchor="start" textLength="2.4" lengthAdjust="spacingAndGlyphs">0</text>
<rect x="541.8" y="223.1" width="5.8" height="3.8" fill="#fff"/><text x="542.3" y="226.3" font-family="Liberation Sans" font-size="3.7" fill="#2a2a2a" font-weight="bold" text-anchor="start" textLength="4.8" lengthAdjust="spacingAndGlyphs">64</text>
<rect x="564.8" y="223.1" width="8.2" height="3.8" fill="#fff"/><text x="565.3" y="226.3" font-family="Liberation Sans" font-size="3.7" fill="#2a2a2a" font-weight="bold" text-anchor="start" textLength="7.2" lengthAdjust="spacingAndGlyphs">128</text>
<rect x="587.8" y="223.1" width="8.2" height="3.8" fill="#fff"/><text x="588.3" y="226.3" font-family="Liberation Sans" font-size="3.7" fill="#2a2a2a" font-weight="bold" text-anchor="start" textLength="7.2" lengthAdjust="spacingAndGlyphs">192</text>
<rect x="610.8" y="223.1" width="8.2" height="3.8" fill="#fff"/><text x="611.3" y="226.3" font-family="Liberation Sans" font-size="3.7" fill="#2a2a2a" font-weight="bold" text-anchor="start" textLength="7.2" lengthAdjust="spacingAndGlyphs">256</text>
<rect x="633.8" y="223.1" width="8.2" height="3.8" fill="#fff"/><text x="634.3" y="226.3" font-family="Liberation Sans" font-size="3.7" fill="#2a2a2a" font-weight="bold" text-anchor="start" textLength="7.2" lengthAdjust="spacingAndGlyphs">320</text>
<rect x="656.8" y="223.1" width="8.2" height="3.8" fill="#fff"/><text x="657.3" y="226.3" font-family="Liberation Sans" font-size="3.7" fill="#2a2a2a" font-weight="bold" text-anchor="start" textLength="7.2" lengthAdjust="spacingAndGlyphs">384</text>
<rect x="679.8" y="223.1" width="8.2" height="3.8" fill="#fff"/><text x="680.3" y="226.3" font-family="Liberation Sans" font-size="3.7" fill="#2a2a2a" font-weight="bold" text-anchor="start" textLength="7.2" lengthAdjust="spacingAndGlyphs">448</text>
<rect x="348.4" y="234.6" width="8.4" height="4.6" fill="#fff"/><text x="349" y="238.6" font-family="Liberation Sans" font-size="4.7" fill="#1a1a1a" font-weight="bold" text-anchor="start" textLength="7.2" lengthAdjust="spacingAndGlyphs">256</text>
<rect x="348.4" y="257.65" width="8.4" height="4.6" fill="#fff"/><text x="349" y="261.65" font-family="Liberation Sans" font-size="4.7" fill="#1a1a1a" font-weight="bold" text-anchor="start" textLength="7.2" lengthAdjust="spacingAndGlyphs">192</text>
<rect x="348.4" y="280.7" width="8.4" height="4.6" fill="#fff"/><text x="349" y="284.7" font-family="Liberation Sans" font-size="4.7" fill="#1a1a1a" font-weight="bold" text-anchor="start" textLength="7.2" lengthAdjust="spacingAndGlyphs">128</text>
<rect x="348.4" y="303.75" width="6" height="4.6" fill="#fff"/><text x="349" y="307.75" font-family="Liberation Sans" font-size="4.7" fill="#1a1a1a" font-weight="bold" text-anchor="start" textLength="4.8" lengthAdjust="spacingAndGlyphs">64</text>
<rect x="348.4" y="326.8" width="3.6" height="4.6" fill="#fff"/><text x="349" y="330.8" font-family="Liberation Sans" font-size="4.7" fill="#1a1a1a" font-weight="bold" text-anchor="start" textLength="2.4" lengthAdjust="spacingAndGlyphs">0</text>
<rect x="348.4" y="349.85" width="8.4" height="4.6" fill="#fff"/><text x="349" y="353.85" font-family="Liberation Sans" font-size="4.7" fill="#1a1a1a" font-weight="bold" text-anchor="start" textLength="7.2" lengthAdjust="spacingAndGlyphs">-64</text>
<rect x="348.4" y="372.9" width="10.8" height="4.6" fill="#fff"/><text x="349" y="376.9" font-family="Liberation Sans" font-size="4.7" fill="#1a1a1a" font-weight="bold" text-anchor="start" textLength="9.6" lengthAdjust="spacingAndGlyphs">-128</text>
<rect x="348.4" y="395.95" width="10.8" height="4.6" fill="#fff"/><text x="349" y="399.95" font-family="Liberation Sans" font-size="4.7" fill="#1a1a1a" font-weight="bold" text-anchor="start" textLength="9.6" lengthAdjust="spacingAndGlyphs">-192</text>
</g>
<g clip-path="url(#cXZ)">
<rect x="215.8" y="362.2" width="43.9" height="31.8" fill="#dca850" fill-opacity="0.7"/>
<path d="M190.4 341.5L198.6 350.8" stroke="#3040e0" stroke-width="0.7"/>
<path d="M227.3 368.8V380" stroke="#8040b0" stroke-width="1.1"/>
<path d="M227.3 380H238.5" stroke="#58c030" stroke-width="0.8"/>
<text x="223.5" y="371.2" font-family="Liberation Sans" font-size="4" fill="#8040a0" font-weight="normal" text-anchor="start">Z</text>
<text x="237.3" y="384.8" font-family="Liberation Sans" font-size="4.2" fill="#50b030" font-weight="normal" text-anchor="start">X</text>
<text x="238.8" y="381.3" font-family="Liberation Sans" font-size="4.2" fill="#6a9a6a" font-weight="normal" text-anchor="start" textLength="13" lengthAdjust="spacingAndGlyphs">func_group</text>
<path d="M6.7 381.8H92.7M6.7 381.8V372.0M14.6 381.8V368.7M22.6 381.8V361.1M30.5 381.8V355.7M38.4 381.8V352.2M46.1 381.8V349.8M54.2 381.8V347.3M61.8 381.8V344.9M70 381.8V345.0M77.5 381.8V350.2M85.7 381.8V355.5M92.7 381.8V358.4M14.6 370L22.8 365.5L32.5 359.5L43.4 354.5L55 350.5L68.9 346.8L80 354L92.7 360M6.7 372L22.8 366.5L32.5 364.5L45 367.7L54.8 369.3L64.5 370.9L73.2 372.5L77.5 373L92.7 376M6.7 372.0L14.6 369.3M6.7 372.0L14.6 368.7M14.6 368.7L22.6 366.6M14.6 369.3L22.6 361.1M22.6 361.1L30.5 364.9M22.6 366.6L30.5 355.7M30.5 355.7L38.4 366.0M30.5 364.9L38.4 352.2M38.4 352.2L46.1 367.9M38.4 366.0L46.1 349.8M46.1 349.8L54.2 369.2M46.1 367.9L54.2 347.3M54.2 347.3L61.8 370.5M54.2 369.2L61.8 344.9M61.8 344.9L70 371.9M61.8 370.5L70 345.0M70 345.0L77.5 373.0M70 371.9L77.5 350.2M77.5 350.2L85.7 374.6M77.5 373.0L85.7 355.5M85.7 355.5L92.7 376.0M85.7 374.6L92.7 358.4M46.1 355L61.8 370L70 352M30.5 364L61.8 357L92.7 374" fill="none" stroke="#3a98e4" stroke-width="0.5"/>
<path d="M6.7 372L14.6 368.7L21.7 361.7L30.4 355.7L39 351.9L49.9 348.7L61.3 344.9L68.9 344.3L75.4 348.7L80.8 352.5L85.1 355.2L92.7 358.4" fill="none" stroke="#2a88dc" stroke-width="0.9"/>
<path d="M15.2 349V357.3" stroke="#3030f0" stroke-width="1.1"/>
<path d="M15.2 357.3H24" stroke="#30e030" stroke-width="1.1"/>
<text x="9.8" y="352.8" font-family="Liberation Sans" font-size="4.2" fill="#3030f0" font-weight="normal" text-anchor="start">z</text>
<text x="20" y="361" font-family="Liberation Sans" font-size="4.2" fill="#30d030" font-weight="normal" text-anchor="start">x</text>
<rect x="7.48" y="340.4" width="13" height="3.8" fill="#fff"/><text x="7.98" y="343.6" font-family="Liberation Sans" font-size="3.7" fill="#2a2a2a" font-weight="bold" text-anchor="start" textLength="12" lengthAdjust="spacingAndGlyphs">-7168</text>
<rect x="23.26" y="340.4" width="13" height="3.8" fill="#fff"/><text x="23.76" y="343.6" font-family="Liberation Sans" font-size="3.7" fill="#2a2a2a" font-weight="bold" text-anchor="start" textLength="12" lengthAdjust="spacingAndGlyphs">-6656</text>
<rect x="39.04" y="340.4" width="13" height="3.8" fill="#fff"/><text x="39.54" y="343.6" font-family="Liberation Sans" font-size="3.7" fill="#2a2a2a" font-weight="bold" text-anchor="start" textLength="12" lengthAdjust="spacingAndGlyphs">-6144</text>
<rect x="54.82" y="340.4" width="13" height="3.8" fill="#fff"/><text x="55.32" y="343.6" font-family="Liberation Sans" font-size="3.7" fill="#2a2a2a" font-weight="bold" text-anchor="start" textLength="12" lengthAdjust="spacingAndGlyphs">-5632</text>
<rect x="70.6" y="340.4" width="13" height="3.8" fill="#fff"/><text x="71.1" y="343.6" font-family="Liberation Sans" font-size="3.7" fill="#2a2a2a" font-weight="bold" text-anchor="start" textLength="12" lengthAdjust="spacingAndGlyphs">-5120</text>
<rect x="86.38" y="340.4" width="13" height="3.8" fill="#fff"/><text x="86.88" y="343.6" font-family="Liberation Sans" font-size="3.7" fill="#2a2a2a" font-weight="bold" text-anchor="start" textLength="12" lengthAdjust="spacingAndGlyphs">-4608</text>
<rect x="102.16" y="340.4" width="13" height="3.8" fill="#fff"/><text x="102.66" y="343.6" font-family="Liberation Sans" font-size="3.7" fill="#2a2a2a" font-weight="bold" text-anchor="start" textLength="12" lengthAdjust="spacingAndGlyphs">-4096</text>
<rect x="117.94" y="340.4" width="13" height="3.8" fill="#fff"/><text x="118.44" y="343.6" font-family="Liberation Sans" font-size="3.7" fill="#2a2a2a" font-weight="bold" text-anchor="start" textLength="12" lengthAdjust="spacingAndGlyphs">-3584</text>
<rect x="133.72" y="340.4" width="13" height="3.8" fill="#fff"/><text x="134.22" y="343.6" font-family="Liberation Sans" font-size="3.7" fill="#2a2a2a" font-weight="bold" text-anchor="start" textLength="12" lengthAdjust="spacingAndGlyphs">-3072</text>
<rect x="149.5" y="340.4" width="13" height="3.8" fill="#fff"/><text x="150" y="343.6" font-family="Liberation Sans" font-size="3.7" fill="#2a2a2a" font-weight="bold" text-anchor="start" textLength="12" lengthAdjust="spacingAndGlyphs">-2560</text>
<rect x="165.28" y="340.4" width="13" height="3.8" fill="#fff"/><text x="165.78" y="343.6" font-family="Liberation Sans" font-size="3.7" fill="#2a2a2a" font-weight="bold" text-anchor="start" textLength="12" lengthAdjust="spacingAndGlyphs">-2048</text>
<rect x="181.06" y="340.4" width="13" height="3.8" fill="#fff"/><text x="181.56" y="343.6" font-family="Liberation Sans" font-size="3.7" fill="#2a2a2a" font-weight="bold" text-anchor="start" textLength="12" lengthAdjust="spacingAndGlyphs">-1536</text>
<rect x="196.84" y="340.4" width="13" height="3.8" fill="#fff"/><text x="197.34" y="343.6" font-family="Liberation Sans" font-size="3.7" fill="#2a2a2a" font-weight="bold" text-anchor="start" textLength="12" lengthAdjust="spacingAndGlyphs">-1024</text>
<rect x="212.62" y="340.4" width="10.6" height="3.8" fill="#fff"/><text x="213.12" y="343.6" font-family="Liberation Sans" font-size="3.7" fill="#2a2a2a" font-weight="bold" text-anchor="start" textLength="9.6" lengthAdjust="spacingAndGlyphs">-512</text>
<rect x="228.4" y="340.4" width="3.4" height="3.8" fill="#fff"/><text x="228.9" y="343.6" font-family="Liberation Sans" font-size="3.7" fill="#2a2a2a" font-weight="bold" text-anchor="start" textLength="2.4" lengthAdjust="spacingAndGlyphs">0</text>
<rect x="244.18" y="340.4" width="8.2" height="3.8" fill="#fff"/><text x="244.68" y="343.6" font-family="Liberation Sans" font-size="3.7" fill="#2a2a2a" font-weight="bold" text-anchor="start" textLength="7.2" lengthAdjust="spacingAndGlyphs">512</text>
<rect x="259.96" y="340.4" width="10.6" height="3.8" fill="#fff"/><text x="260.46" y="343.6" font-family="Liberation Sans" font-size="3.7" fill="#2a2a2a" font-weight="bold" text-anchor="start" textLength="9.6" lengthAdjust="spacingAndGlyphs">1024</text>
<rect x="275.74" y="340.4" width="10.6" height="3.8" fill="#fff"/><text x="276.24" y="343.6" font-family="Liberation Sans" font-size="3.7" fill="#2a2a2a" font-weight="bold" text-anchor="start" textLength="9.6" lengthAdjust="spacingAndGlyphs">1536</text>
<rect x="291.52" y="340.4" width="10.6" height="3.8" fill="#fff"/><text x="292.02" y="343.6" font-family="Liberation Sans" font-size="3.7" fill="#2a2a2a" font-weight="bold" text-anchor="start" textLength="9.6" lengthAdjust="spacingAndGlyphs">2048</text>
<rect x="307.3" y="340.4" width="10.6" height="3.8" fill="#fff"/><text x="307.8" y="343.6" font-family="Liberation Sans" font-size="3.7" fill="#2a2a2a" font-weight="bold" text-anchor="start" textLength="9.6" lengthAdjust="spacingAndGlyphs">2560</text>
<rect x="323.08" y="340.4" width="10.6" height="3.8" fill="#fff"/><text x="323.58" y="343.6" font-family="Liberation Sans" font-size="3.7" fill="#2a2a2a" font-weight="bold" text-anchor="start" textLength="9.6" lengthAdjust="spacingAndGlyphs">3072</text>
<rect x="338.86" y="340.4" width="10.6" height="3.8" fill="#fff"/><text x="339.36" y="343.6" font-family="Liberation Sans" font-size="3.7" fill="#2a2a2a" font-weight="bold" text-anchor="start" textLength="9.6" lengthAdjust="spacingAndGlyphs">3584</text>
<rect x="1.2" y="346" width="10.8" height="4.6" fill="#fff"/><text x="1.8" y="350" font-family="Liberation Sans" font-size="4.7" fill="#1a1a1a" font-weight="bold" text-anchor="start" textLength="9.6" lengthAdjust="spacingAndGlyphs">1024</text>
<rect x="1.2" y="361.65" width="8.4" height="4.6" fill="#fff"/><text x="1.8" y="365.65" font-family="Liberation Sans" font-size="4.7" fill="#1a1a1a" font-weight="bold" text-anchor="start" textLength="7.2" lengthAdjust="spacingAndGlyphs">512</text>
<rect x="1.2" y="377.3" width="3.6" height="4.6" fill="#fff"/><text x="1.8" y="381.3" font-family="Liberation Sans" font-size="4.7" fill="#1a1a1a" font-weight="bold" text-anchor="start" textLength="2.4" lengthAdjust="spacingAndGlyphs">0</text>
<rect x="1.2" y="392.95" width="10.8" height="4.6" fill="#fff"/><text x="1.8" y="396.95" font-family="Liberation Sans" font-size="4.7" fill="#1a1a1a" font-weight="bold" text-anchor="start" textLength="9.6" lengthAdjust="spacingAndGlyphs">-512</text>
</g>
<rect x="344" y="35" width="4" height="371" fill="#edeae5"/>
<rect x="345.5" y="35" width="1" height="371" fill="#f8f7f5"/>
<rect x="348" y="220" width="342" height="2" fill="#edeae5"/>
<rect x="0" y="405" width="690" height="10" fill="#edeae5"/>
<rect x="0" y="405.5" width="690" height="0.6" fill="#d8d4cc"/>
<rect x="186" y="406.5" width="0.7" height="8.5" fill="#bdb8ae"/>
<rect x="335" y="406.5" width="0.7" height="8.5" fill="#bdb8ae"/>
<rect x="471" y="406.5" width="0.7" height="8.5" fill="#bdb8ae"/>
<rect x="555" y="406.5" width="0.7" height="8.5" fill="#bdb8ae"/>
<text x="2" y="412.8" font-family="Liberation Sans" font-size="5.6" fill="#1a1a1a" font-weight="normal" text-anchor="start" textLength="101.5" lengthAdjust="spacingAndGlyphs">Translate Tool: translate objects and components</text>
<text x="187.6" y="412.8" font-family="Liberation Sans" font-size="5.6" fill="#1a1a1a" font-weight="normal" text-anchor="start" textLength="4.6" lengthAdjust="spacingAndGlyphs">x:</text>
<text x="199.3" y="412.8" font-family="Liberation Sans" font-size="5.6" fill="#1a1a1a" font-weight="normal" text-anchor="start" textLength="5.9" lengthAdjust="spacingAndGlyphs">0.0</text>
<text x="208.5" y="412.8" font-family="Liberation Sans" font-size="5.6" fill="#1a1a1a" font-weight="normal" text-anchor="start" textLength="4.5" lengthAdjust="spacingAndGlyphs">y:</text>
<text x="215" y="412.8" font-family="Liberation Sans" font-size="5.6" fill="#1a1a1a" font-weight="normal" text-anchor="start" textLength="15.6" lengthAdjust="spacingAndGlyphs">-7128.0</text>
<text x="233.9" y="412.8" font-family="Liberation Sans" font-size="5.6" fill="#1a1a1a" font-weight="normal" text-anchor="start" textLength="4.5" lengthAdjust="spacingAndGlyphs">z:</text>
<text x="241.7" y="412.8" font-family="Liberation Sans" font-size="5.6" fill="#1a1a1a" font-weight="normal" text-anchor="start" textLength="11.7" lengthAdjust="spacingAndGlyphs">896.0</text>
<text x="337.8" y="412.8" font-family="Liberation Sans" font-size="5.6" fill="#1a1a1a" font-weight="normal" text-anchor="start" textLength="50.2" lengthAdjust="spacingAndGlyphs">Brushes: 155 Entities: 2</text>
<text x="558.1" y="412.8" font-family="Liberation Sans" font-size="5.9" fill="#202020" font-weight="normal" text-anchor="start" textLength="7.1" lengthAdjust="spacingAndGlyphs">G:8</text>
<text x="568.8" y="412.8" font-family="Liberation Sans" font-size="5.9" fill="#202020" font-weight="normal" text-anchor="start" textLength="9.6" lengthAdjust="spacingAndGlyphs">R:45</text>
<text x="580.4" y="412.8" font-family="Liberation Sans" font-size="5.9" fill="#202020" font-weight="normal" text-anchor="start" textLength="10.7" lengthAdjust="spacingAndGlyphs">C:13</text>
<text x="593.6" y="412.8" font-family="Liberation Sans" font-size="5.9" fill="#202020" font-weight="normal" text-anchor="start" textLength="12.7" lengthAdjust="spacingAndGlyphs">L:OFF</text>
</svg>
</body></html>
